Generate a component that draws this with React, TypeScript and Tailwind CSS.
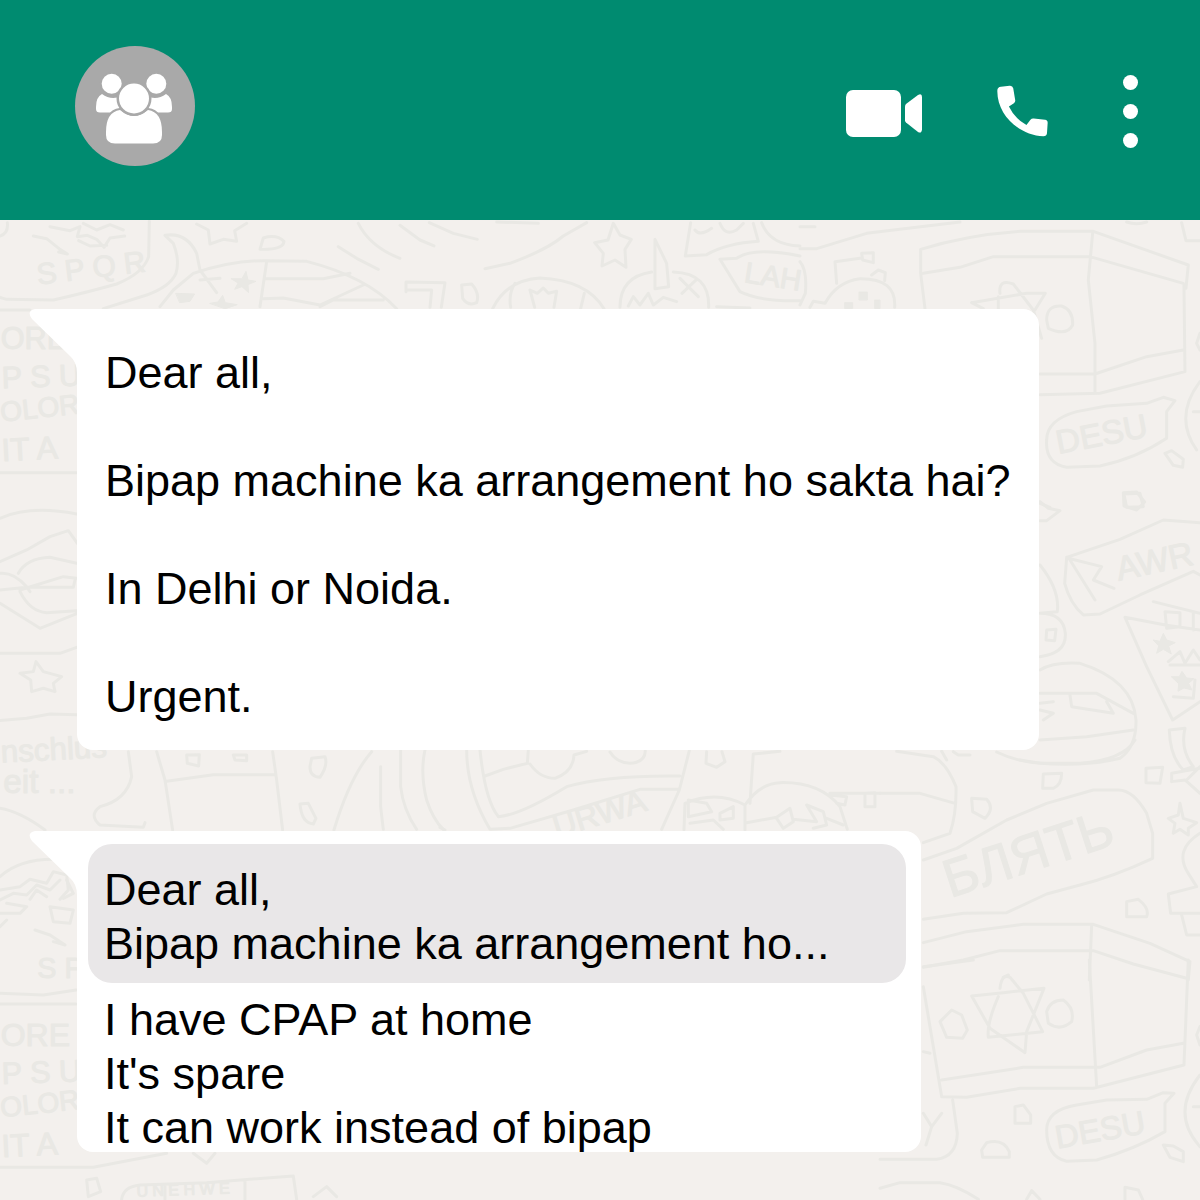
import type { ReactNode } from "react";

type SketchProps = { x: number; y: number; lines: string; children?: ReactNode };

/* A cluster of wallpaper line art, drawn on a grid three times finer than the page. */
function Sketch({ x, y, lines, children }: SketchProps) {
  return (
    <g transform={`translate(${x} ${y}) scale(0.3333)`}>
      <path d={lines} />
      <g fill="#e9e8e4" strokeWidth="3">
        {children}
      </g>
    </g>
  );
}

type WordProps = { x: number; y: number; size: number; turn?: number; children: string };

function Word({ x, y, size, turn = 0, children }: WordProps) {
  return (
    <text x={x} y={y} fontSize={size} transform={`rotate(${turn} ${x} ${y})`}>
      {children}
    </text>
  );
}

function Wallpaper() {
  return (
    <svg
      aria-hidden="true"
      className="absolute inset-0 h-full w-full font-['Liberation_Sans',Arial,sans-serif]"
      viewBox="0 220 1200 980"
      preserveAspectRatio="xMinYMin slice"
      fill="none"
      stroke="#e9e8e4"
      strokeWidth="9"
      strokeLinecap="round"
      strokeLinejoin="round"
    >
      <Sketch
        x={0}
        y={210}
        lines="M0 78Q26 70 22 38M448 34L446 140Q430 190 350 222Q250 250 160 270L20 268L0 262M0 300H90M100 78L140 86L180 118L202 132L176 126M150 50L210 62L240 50L232 80L262 76L290 88L312 112L330 84L374 78M250 40L290 60L330 44L370 60M236 92L270 108L320 106M495 76L520 100Q540 150 528 190Q510 230 440 255L310 296M495 76Q560 66 590 130L600 180L650 248M480 290L520 240L580 190Q700 150 800 152L920 154Q1100 200 1190 296M600 210L660 205M800 155L780 290M795 206H970L1050 190M790 266L850 264L960 285L1090 225M960 290L1000 270H1150M590 42L625 60L630 102L670 88L710 94L704 62L740 40M790 84Q830 72 852 94Q850 120 780 118ZM1015 110L1070 145L1135 178M1075 40Q1110 110 1200 145"
      >
        <path d="M694 206L726 206L738 184L744 210L768 214L744 224L746 248L726 230L704 238L714 220ZM528 250L584 252L570 274L540 278ZM630 280L654 276L668 256L676 278L712 284L676 296Z" />
        <Word x={114} y={224} size={90} turn={-7}>S P Q R</Word>
        <Word x={2} y={418} size={92}>ORE</Word>
      </Sketch>

      <Sketch
        x={400}
        y={210}
        lines="M0 46L60 90L102 108M88 38L160 70L232 88M290 36L415 40M255 176L330 160Q440 120 490 78L560 38M640 40L660 75L694 88L675 118L678 172L645 150L606 168L610 130L584 98L624 90ZM18 245V216L135 218L124 292M20 240H95L90 292M185 225L215 222Q240 250 230 278Q205 290 188 265ZM278 296Q320 210 420 204Q560 210 612 296M345 220Q325 250 332 292M390 240L412 250L430 234L445 250L470 244L462 292M390 240L404 292M553 250L542 296M765 88L800 160L806 230L765 236ZM660 292Q660 200 755 186M820 186Q930 190 926 292M840 205L895 260M890 208L846 250M685 288L700 260L720 285L745 250L760 285L790 262L830 275M872 38L856 138L920 134Q980 100 1075 94L1060 40M885 60Q900 80 935 55M960 40Q975 80 1010 60L1030 40M1085 38Q1110 105 1200 108M960 148L1010 145Q1060 110 1200 138M960 148L1020 245Q1080 275 1200 272M950 290L1050 294"
      >
        <Word x={1030} y={216} size={88} turn={9}>LAH</Word>
      </Sketch>

      <Sketch
        x={800}
        y={210}
        lines="M0 50H45M0 116H50L200 70L480 36M0 155Q22 180 16 250L0 285M110 220L105 155L180 145M185 130L220 128V158L188 150ZM215 195L235 180L256 188L254 212M30 292L40 274L75 280Q110 215 180 206Q290 205 284 292M375 296L362 190V118Q500 75 660 64H880L1165 165L1158 235M370 190L480 172L580 140H870L1150 220M878 70L865 210L885 400V550M1152 225L1155 485L900 550L720 554M720 492H885L1040 440L1150 420M515 278L680 250H736L705 300M515 278L550 296M600 250Q595 205 640 222L700 300L725 385M595 260V296M740 330Q740 285 785 288Q820 300 818 345Q800 380 745 355ZM980 36Q1010 46 1040 36M1145 38L1158 92H1200M1200 370L1190 400L1200 420M740 690Q740 630 830 605L920 588L1040 580L1090 562L1125 572L1100 605V685Q1010 745 900 768L800 772Q735 760 740 690ZM1200 515Q1120 620 1190 720M1180 605H1200M1095 730L1115 722L1150 748L1148 772L1120 766ZM972 852L1020 850L1030 890L980 892ZM720 880L750 892"
      >
        <path d="M178 246H202V270H178ZM135 278H158V296H135ZM225 270H240V296H225Z" />
        <Word x={775} y={732} size={100} turn={-11}>DESU</Word>
      </Sketch>

      <Sketch
        x={1020}
        y={480}
        lines="M310 38L350 36L374 66L350 90L312 78ZM60 65L85 85L120 92L80 122H60M140 232L300 178L430 120L540 128M140 232L134 310Q150 370 190 405L240 402L360 345L520 274L540 285M145 235L245 260L220 300L282 325M150 240L225 360M60 255Q120 330 112 395L60 400M60 400Q130 400 136 460Q140 520 60 530M80 450L108 448L104 482L78 480ZM60 570Q100 545 180 550Q340 600 348 720Q350 800 300 835Q200 860 60 850L0 840M60 640H230L340 700M150 645L155 680L280 700L260 665M60 780L200 770L340 750M400 365L540 400M315 412L440 436L540 450M315 412L380 560L458 720L540 665M435 395L480 398V440L440 445ZM520 400V450M448 750L495 745Q480 810 520 860L490 870Q450 830 448 750ZM378 865L428 862L420 910L378 908ZM455 880L540 865M455 880V905L495 900L540 940M500 900L540 860M60 670L100 665M60 690L100 700L70 720M460 650L520 655L525 600"
      >
        <path d="M400 480L420 484L430 460L440 480L466 488L446 498L454 522L430 508L410 520L416 498ZM455 590L478 590L486 574L500 594L522 596L506 610L516 630L492 624L474 634L476 612Z" />
        <path fill="none" strokeWidth="9" d="M445 545L480 515L495 550L520 510L540 540M450 555H540" />
        <Word x={296} y={302} size={102} turn={-12}>AWR</Word>
      </Sketch>

      <Sketch
        x={0}
        y={340}
        lines="M0 398H230M0 535Q90 495 230 522M0 665L80 630L150 590L205 572L232 610M0 700Q40 695 80 740L90 755M55 700Q80 655 150 652L230 670M60 750L190 710L230 715M0 750L80 742H220L225 720M60 755Q90 815 140 818L230 812M0 790L120 865L232 820M0 940H180L230 922M60 1000L100 995L108 965L130 995L185 1010L160 1030L165 1055L130 1045L95 1055L92 1020ZM0 1142L80 1135L150 1122L230 1124"
      >
        <Word x={6} y={145} size={92} turn={-2}>P S U</Word>
        <Word x={4} y={245} size={84} turn={-6}>OLOR</Word>
        <Word x={6} y={364} size={96} turn={-3}>IT  A</Word>
        <Word x={4} y={1268} size={94} turn={-3}>nschlus</Word>
      </Sketch>

      <Sketch
        x={0}
        y={740}
        lines="M385 35L395 110Q380 180 300 200Q265 225 300 255L430 262L435 248M470 35L495 120L518 270M500 124L640 104H825M818 35L830 120L848 270M560 45L598 44L596 78L562 70ZM700 45H740V62L705 60ZM935 55L975 50Q985 75 960 112Q930 110 930 80ZM900 192L925 190L948 235L940 252Q905 250 900 192ZM1115 35Q1050 110 1002 270M1142 80V200L1150 268M1202 30V140Q1210 210 1250 268M1275 30Q1260 100 1280 180Q1300 240 1330 268M0 205Q60 215 135 270M0 410Q60 355 170 358M0 450L60 440L90 418L140 430L160 395L200 405L205 450L180 478M90 478L110 450L140 470"
      >
        <Word x={10} y={160} size={100}>eit ...</Word>
      </Sketch>

      <Sketch
        x={440}
        y={740}
        lines="M80 30Q80 150 150 268L210 265L400 210L600 148H715M120 30Q135 180 175 230Q240 225 380 140Q500 105 720 108M135 108L190 88L262 70L265 30M270 72Q300 115 345 115Q400 95 402 45L440 34M510 36Q530 68 570 70Q615 68 616 32M748 32L718 150L665 268M800 35L798 70L830 82L855 65L846 35M1020 34L940 42L930 190M732 270L735 190Q830 150 915 195V270M745 180L800 190L815 215L745 230ZM750 250L820 240L850 268M840 220L880 200V235L840 240ZM915 195Q960 130 1020 128Q1140 125 1200 200L1222 268M920 248L1010 232L1050 205L1060 245L1030 265L1010 235M1060 238L1130 245L1100 195L1150 215L1160 255L1120 265M1160 235L1210 255M1170 160H1320M1275 160L1305 158V200H1275ZM1170 165L1220 170L1215 195L1190 190M0 262L15 270"
      >
        <Word x={350} y={294} size={96} turn={-17}>URWA</Word>
      </Sketch>

      <Sketch
        x={880}
        y={740}
        lines="M50 34L160 50Q200 70 228 140Q230 220 210 280L130 308M185 34L200 60M220 35L235 45H270M0 160H120L225 190M350 36Q420 70 500 70H600Q730 60 765 0M490 102L545 100Q545 135 520 145H488ZM275 175L320 178Q345 205 315 235L278 215ZM130 360L230 325L380 240L500 190L640 150H715Q760 150 800 220L818 280V355Q700 410 600 435L500 462L380 518L250 520L130 538M740 485L775 478Q810 505 800 530L740 530ZM900 190L910 235L950 248L925 265V285L900 268L880 280L885 250L865 235L895 225ZM960 280Q880 330 925 400L950 440L865 462L872 520H960M905 525L920 585H960M130 608L260 575L430 553H640L810 610L930 665L925 720M130 682L250 660L360 632H640L760 672L920 715M635 558L628 720M370 712L385 705"
      >
        <Word x={210} y={474} size={160} turn={-18}>БЛЯТЬ</Word>
      </Sketch>

      <Sketch
        x={880}
        y={960}
        lines="M130 20L280 0M628 0L650 380M925 0L912 315L640 385H420L260 412L185 410L130 80M185 360L430 322H660L800 270L910 250M275 108L370 98L492 85L440 215L435 278L330 205L275 108M360 85Q365 40 390 52L430 100L488 215L325 232Q320 190 355 110M180 185L215 150L245 165L262 210L248 235L200 232ZM500 155Q510 120 550 120Q585 145 575 185Q540 215 505 190ZM405 440L430 435L452 465V490H405ZM305 570L320 548Q370 535 388 575V592H308ZM500 510Q500 450 590 435L680 420L800 418L850 398L882 400L855 430V515Q760 570 650 600L560 604Q500 590 500 510ZM960 345Q870 460 960 560M940 440H960M850 555L880 558L910 575V605L870 592ZM218 420L232 520Q230 590 170 598H0M130 460L155 500L185 460M155 500L138 555M0 685L60 668H180Q230 675 295 718M440 718L455 692L480 718M735 718V682L775 690L788 718M130 275L150 280M960 200L950 225L960 255"
      >
        <Word x={532} y={566} size={98} turn={-10}>DESU</Word>
      </Sketch>

      <Sketch
        x={0}
        y={880}
        lines="M0 60L40 40L80 45L110 15L150 30L180 0M0 100L60 100L80 80L20 70M0 140L20 120M200 0L220 40L190 55M150 80L220 90L210 130L160 125ZM105 150L150 165L195 195L160 185M0 340L130 345L228 330M0 372H228M0 862H280L500 820M580 820L620 850L645 820M260 900L290 895L302 935L265 950ZM365 958Q370 920 420 915L620 908L880 888L890 958M495 918V958M735 900V958M940 950L980 920L1010 950"
      >
        <Word x={112} y={295} size={86}>S P Q</Word>
        <Word x={2} y={497} size={96}>ORE</Word>
        <Word x={6} y={612} size={92} turn={-2}>P S U</Word>
        <Word x={4} y={712} size={84} turn={-6}>OLOR</Word>
        <Word x={6} y={832} size={96} turn={-3}>IT  A</Word>
        <Word x={410} y={950} size={48} turn={-2}>U N E H W E</Word>
      </Sketch>
    </svg>
  );
}

function GroupAvatar() {
  return (
    <button type="button" aria-label="Group info" className="size-[120px] shrink-0 rounded-full bg-[#a9a9a9]">
      <svg viewBox="0 0 120 120" className="size-full" fill="#fff" aria-hidden="true">
        <path d="M27 48Q21 51 21 61V63Q21 66.500 25 66.500H47V50Q36 55 27 48Z" />
        <path d="M91 48Q97 51 97 61V63Q97 66.500 93 66.500H71V50Q82 55 91 48Z" />
        <g stroke="#a9a9a9" strokeWidth="4" paintOrder="stroke">
          <circle cx="36.700" cy="37.700" r="10" />
          <circle cx="81.300" cy="37.700" r="10" />
          <path d="M45 64Q31 66 31 86V89Q31 97.500 40 97.500H78Q87 97.500 87 89V86Q87 66 73 64Q59 76 45 64Z" />
          <circle cx="59" cy="52.500" r="15" strokeWidth="5" />
        </g>
      </svg>
    </button>
  );
}

function Header() {
  return (
    <header className="flex h-[220px] items-start justify-between bg-[#008b70] pt-[46px] pr-[62px] pl-[75px]">
      <GroupAvatar />
      <div className="flex h-[130px] items-center gap-[75px]">
        <button type="button" aria-label="Video call">
          <svg viewBox="0 0 78 52" className="block h-[52px] w-[78px]" fill="#fff" aria-hidden="true">
            <rect x="2" y="5" width="55" height="47" rx="7" />
            <path d="M61 21.500Q61 20 62 19L74 10Q78 8 78 12V44.500Q77.500 49 74 47L62 37.500Q61 36.500 61 35.500Z" />
          </svg>
        </button>
        <button type="button" aria-label="Voice call">
          <svg viewBox="500 74 154 155" className="block h-[52px] w-[51px]" fill="#fff" aria-hidden="true">
            <path d="M512 78L538 75Q547 74 549 83L555 119Q556 125 551 128L536 138Q553 174 589 194L601 178Q605 173 611 174L645 178Q653 179 653 187L651 218Q650 228 640 228C570 226 500 165 501 90Q501 79 512 78Z" />
          </svg>
        </button>
        <button type="button" aria-label="More options" className="flex flex-col gap-[14px]">
          <span className="size-[15px] rounded-full bg-white" />
          <span className="size-[15px] rounded-full bg-white" />
          <span className="size-[15px] rounded-full bg-white" />
        </button>
      </div>
    </header>
  );
}

function Bubble({ children }: { children: ReactNode }) {
  return (
    <article className="relative w-fit max-w-full rounded-2xl rounded-tl-none bg-white">
      <svg viewBox="0 0 48 64" className="absolute top-0 right-full h-16 w-12" fill="#fff" aria-hidden="true">
        <path d="M48 0H6Q-3 2 3 10L41 47Q48 53 48 64Z" />
      </svg>
      {children}
    </article>
  );
}

const request = ["Dear all,", "Bipap machine ka arrangement ho sakta hai?", "In Delhi or Noida.", "Urgent."];
const quoted = ["Dear all,", "Bipap machine ka arrangement ho..."];
const reply = ["I have CPAP at home", "It's spare", "It can work instead of bipap"];

export default function App() {
  return (
    <div className="flex min-h-screen flex-col bg-[#f3f0ed] font-['Liberation_Sans',Arial,sans-serif] text-black">
      <Header />
      <main className="relative grow overflow-hidden">
        <Wallpaper />
        <div className="relative flex flex-col items-start gap-[81px] pt-[89px] pr-8 pb-12 pl-[77px] text-[45px] leading-[54px]">
          <Bubble>
            <div className="flex flex-col gap-[54px] pt-[37px] pr-7 pb-[26px] pl-7">
              {request.map((line) => (
                <p key={line}>{line}</p>
              ))}
            </div>
          </Bubble>
          <Bubble>
            <div className="pt-[13px] pr-[15px] pl-[11px]">
              <blockquote className="rounded-3xl bg-[#e9e7e8] pt-[19px] pr-[77px] pb-3 pl-4">
                {quoted.map((line) => (
                  <p key={line}>{line}</p>
                ))}
              </blockquote>
              <div className="-mb-[3px] pt-[10px] pl-4">
                {reply.map((line) => (
                  <p key={line}>{line}</p>
                ))}
              </div>
            </div>
          </Bubble>
        </div>
      </main>
    </div>
  );
}
